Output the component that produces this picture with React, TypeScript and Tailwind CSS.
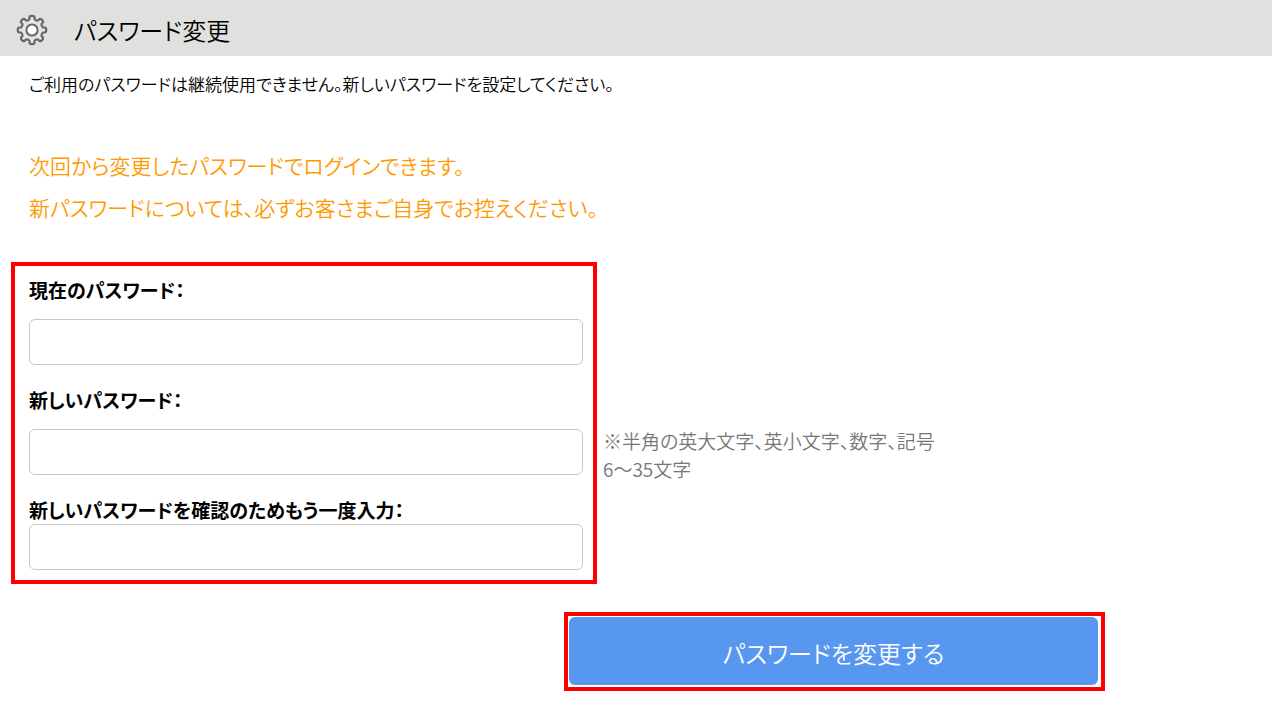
import { useId } from "react";

const TEETH = 8;

function polar(radius: number, degrees: number) {
  const rad = (degrees * Math.PI) / 180;
  return `${(16 + radius * Math.sin(rad)).toFixed(2)} ${(16 - radius * Math.cos(rad)).toFixed(2)}`;
}

const gearPath =
  Array.from({ length: TEETH }, (_, i) => {
    const a = (i * 360) / TEETH;
    return [
      `${i === 0 ? "M" : "L"}${polar(11.2, a - 13)}`,
      `L${polar(13, a - 11)}`,
      `Q${polar(14.2, a - 9)} ${polar(14.2, a - 5)}`,
      `L${polar(14.2, a + 5)}`,
      `Q${polar(14.2, a + 9)} ${polar(13, a + 11)}`,
      `L${polar(11.2, a + 13)}`,
      `Q${polar(10, a + 22.5)} ${polar(11.2, a + 32)}`,
    ].join("");
  }).join("") + "Z";

function GearIcon() {
  return (
    <svg viewBox="0 0 32 32" aria-hidden className="h-8 w-8 shrink-0">
      <path d={gearPath} fill="#e4e4e4" stroke="#666" strokeWidth="2.2" strokeLinejoin="round" />
      <circle cx="16" cy="16" r="5.6" fill="#fff" stroke="#666" strokeWidth="2" />
    </svg>
  );
}

function PasswordField({ label, tight = false }: { label: string; tight?: boolean }) {
  const id = useId();
  return (
    <div className={tight ? "flex flex-col" : "flex flex-col gap-[15px]"}>
      <label htmlFor={id} className="text-[19px] leading-7 font-bold text-black">
        {label}
      </label>
      <input
        id={id}
        type="password"
        className="h-[46px] w-full rounded-md border border-[#c8c8c8] bg-white px-3 text-[19px] outline-none focus:border-[#5897f0]"
      />
    </div>
  );
}

export default function App() {
  return (
    <div
      lang="ja"
      className="bg-white pb-7 font-['Noto_Sans_CJK_JP',sans-serif] text-black [font-feature-settings:'palt']"
    >
      <header className="flex h-14 items-center gap-[26px] bg-[#e0e0df] px-4 pt-1">
        <GearIcon />
        <h1 className="text-2xl leading-9 font-[350]">パスワード変更</h1>
      </header>

      <main>
        <p className="px-[29px] pt-3.5 text-[17px] leading-7 font-[350]">
          ご利用のパスワードは継続使用できません。新しいパスワードを設定してください。
        </p>

        <p className="px-[29px] pt-[46px] text-[21px] leading-[42px] font-[350] text-[#ff9900]">
          次回から変更したパスワードでログインできます。
          <br />
          新パスワードについては、必ずお客さまご自身でお控えください。
        </p>

        <form onSubmit={(e) => e.preventDefault()}>
          <div className="flex items-start gap-1.5 px-[11px] pt-[34px]">
            <div className="flex w-full max-w-[586px] flex-col gap-[21px] border-4 border-[#ff0000] py-2.5 pr-2.5 pl-3.5">
              <PasswordField label="現在のパスワード：" />
              <PasswordField label="新しいパスワード：" />
              <PasswordField label="新しいパスワードを確認のためもう一度入力：" tight />
            </div>
            <p className="shrink-0 pt-[165px] text-[19px] leading-7 font-[350] text-[#777]">
              ※半角の英大文字、英小文字、数字、記号
              <br />
              6～35文字
            </p>
          </div>

          <div className="mt-7 mr-[167px] ml-auto max-w-[541px] border-4 border-[#ff0000] p-px pr-[3px] pb-0.5">
            <button
              type="submit"
              className="h-[68px] w-full cursor-pointer rounded-md bg-[#5897f0] pt-1 text-2xl font-[350] text-white"
            >
              パスワードを変更する
            </button>
          </div>
        </form>
      </main>
    </div>
  );
}
